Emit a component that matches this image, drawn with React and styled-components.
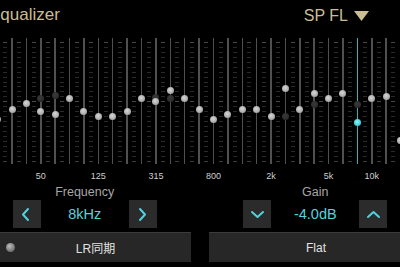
import React from 'react';
import styled, { createGlobalStyle } from 'styled-components';

const GlobalStyle = createGlobalStyle`
  html, body {
    margin: 0;
    padding: 0;
    background: #000;
  }
  body {
    font-family: "Liberation Sans", "Noto Sans CJK JP", sans-serif;
  }
`;

const LANE_TOP = 38;

// y = knob centre in page pixels, ghost = dimmed knob of the other channel
const BANDS = [
  { y: 119.3 },
  { y: 109 },
  { y: 103.7 },
  { y: 111.7, ghost: 98.3, label: '50' },
  { y: 114.3, ghost: 95.7 },
  { y: 98.7 },
  { y: 111.7 },
  { y: 116.7, label: '125' },
  { y: 116.7 },
  { y: 111.7 },
  { y: 98.3 },
  { y: 101.3, ghost: 97.7, label: '315' },
  { y: 90.7, ghost: 98.3 },
  { y: 98.3 },
  { y: 109 },
  { y: 119.3, label: '800' },
  { y: 114.3 },
  { y: 109 },
  { y: 109 },
  { y: 116.7, label: '2k' },
  { y: 88, ghost: 116.7 },
  { y: 109 },
  { y: 93.3, ghost: 104 },
  { y: 98.7, label: '5k' },
  { y: 93.3 },
  { y: 122.3, ghost: 104, active: true },
  { y: 98.7, label: '10k' },
  { y: 96 },
  { y: 140 },
];

const Screen = styled.div`
  width: 400px;
  height: 267px;
  overflow: hidden;
  background: #000;
  display: flex;
  flex-direction: column;
`;

const Header = styled.header`
  height: ${LANE_TOP}px;
  display: flex;
  justify-content: space-between;
  align-items: flex-start;
  color: #cbbd93;
`;

const Title = styled.h1`
  margin: 5px 0 0 -11px;
  font-size: 17px;
  font-weight: normal;
  line-height: 20px;
`;

const Preset = styled.div`
  display: flex;
  align-items: center;
  gap: 6px;
  margin: 6px 31px 0 0;
  font-size: 16px;
  line-height: 20px;
`;

const Bank = styled.div`
  display: flex;
  margin-left: -3.15px;
`;

const Band = styled.div`
  flex: 0 0 14.4px;
  display: flex;
  flex-direction: column;
`;

const Lane = styled.div`
  height: 126px;
  display: flex;
`;

const Track = styled.div`
  position: relative;
  width: 1.5px;
  background: ${p => (p.$active ? '#2bb3bf' : '#505050')};
`;

const Ticks = styled.div`
  width: 4px;
  margin-left: 4.45px;
  background-image:
    linear-gradient(#484848, #484848),
    linear-gradient(#484848, #484848),
    linear-gradient(#3c3c3c, #3c3c3c),
    repeating-linear-gradient(to bottom, #2a2a2a 0 1px, transparent 1px 4.94px);
  background-size: 100% 1px, 100% 1px, 100% 1px, 100% 119.6px;
  background-position: 0 4px, 0 63.3px, 0 122.6px, 0 4px;
  background-repeat: no-repeat;
`;

const Knob = styled.span`
  position: absolute;
  left: 50%;
  width: 7px;
  height: 7px;
  margin: -3.5px 0 0 -3.5px;
  border-radius: 50%;
  background: ${p =>
    p.$ghost
      ? 'radial-gradient(circle at 45% 40%, #3a3a3a, #2a2a2a 75%)'
      : p.$active
      ? 'radial-gradient(circle at 45% 40%, #8ff0f6, #45d0dc 60%, #2aa9b6)'
      : 'radial-gradient(circle at 45% 40%, #d6d6d6, #a8a8a8 65%, #858585)'};
`;

const FreqLabel = styled.div`
  width: 1.5px;
  min-height: 10px;
  margin-top: 7px;
  display: flex;
  justify-content: center;
  font-size: 9px;
  line-height: 10px;
  color: #cfcfcf;
  white-space: nowrap;
`;

const Controls = styled.div`
  display: flex;
  gap: 86.6px;
  margin-top: 4px;
  padding-left: 12.7px;
`;

const Group = styled.div`
  width: 144px;
  display: flex;
  flex-direction: column;
  align-items: center;
`;

const Caption = styled.div`
  font-size: 12.5px;
  line-height: 15px;
  color: #a6a6a6;
`;

const Stepper = styled.div`
  width: 100%;
  height: 28px;
  display: flex;
  align-items: center;
  justify-content: space-between;
`;

const StepButton = styled.button`
  width: 28px;
  height: 28px;
  padding: 0;
  border: none;
  background: #2b2b2b;
  display: flex;
  align-items: center;
  justify-content: center;
`;

const Value = styled.span`
  font-size: 14.5px;
  color: #52d3de;
`;

const Footer = styled.div`
  display: flex;
  gap: 18px;
  margin-top: 4px;
`;

const Bar = styled.div`
  flex: 0 0 ${p => p.$width}px;
  height: 29px;
  background: #272727;
  border-top: 1px solid #3b3b3b;
  display: grid;
  grid-template-columns: 1fr auto 1fr;
  align-items: center;
  font-size: 12px;
  color: #e2e2e2;
`;

const Led = styled.span`
  justify-self: start;
  width: 9px;
  height: 9px;
  margin-left: 6px;
  border-radius: 50%;
  background: radial-gradient(circle at 40% 35%, #bdbdbd, #7a7a7a 60%, #555);
`;

const Chevron = ({ dir }) => {
  const pts = {
    left: '9,2 4,7.5 9,13',
    right: '5,2 10,7.5 5,13',
    down: '2,5 7.5,10 13,5',
    up: '2,10 7.5,5 13,10',
  }[dir];
  return (
    <svg width="15" height="15" viewBox="0 0 15 15">
      <polyline points={pts} fill="none" stroke="#4fd3de" strokeWidth="2" strokeLinecap="round" strokeLinejoin="round" />
    </svg>
  );
};

export default function App() {
  return (
    <Screen>
      <GlobalStyle />
      <Header>
        <Title>Equalizer</Title>
        <Preset>
          SP FL
          <svg width="15" height="10" viewBox="0 0 15 10">
            <polygon points="0,0 15,0 7.5,10" fill="#cbbd93" />
          </svg>
        </Preset>
      </Header>

      <Bank>
        {BANDS.map((b, i) => (
          <Band key={i}>
            <Lane>
              <Track $active={b.active}>
                {b.ghost && <Knob $ghost style={{ top: b.ghost - LANE_TOP }} />}
                <Knob $active={b.active} style={{ top: b.y - LANE_TOP }} />
              </Track>
              <Ticks />
            </Lane>
            <FreqLabel>{b.label}</FreqLabel>
          </Band>
        ))}
      </Bank>

      <Controls>
        <Group>
          <Caption>Frequency</Caption>
          <Stepper>
            <StepButton><Chevron dir="left" /></StepButton>
            <Value>8kHz</Value>
            <StepButton><Chevron dir="right" /></StepButton>
          </Stepper>
        </Group>
        <Group>
          <Caption>Gain</Caption>
          <Stepper>
            <StepButton><Chevron dir="down" /></StepButton>
            <Value>-4.0dB</Value>
            <StepButton><Chevron dir="up" /></StepButton>
          </Stepper>
        </Group>
      </Controls>

      <Footer>
        <Bar $width={191}>
          <Led />
          <span>LR同期</span>
        </Bar>
        <Bar $width={214}>
          <span />
          <span>Flat</span>
        </Bar>
      </Footer>
    </Screen>
  );
}
